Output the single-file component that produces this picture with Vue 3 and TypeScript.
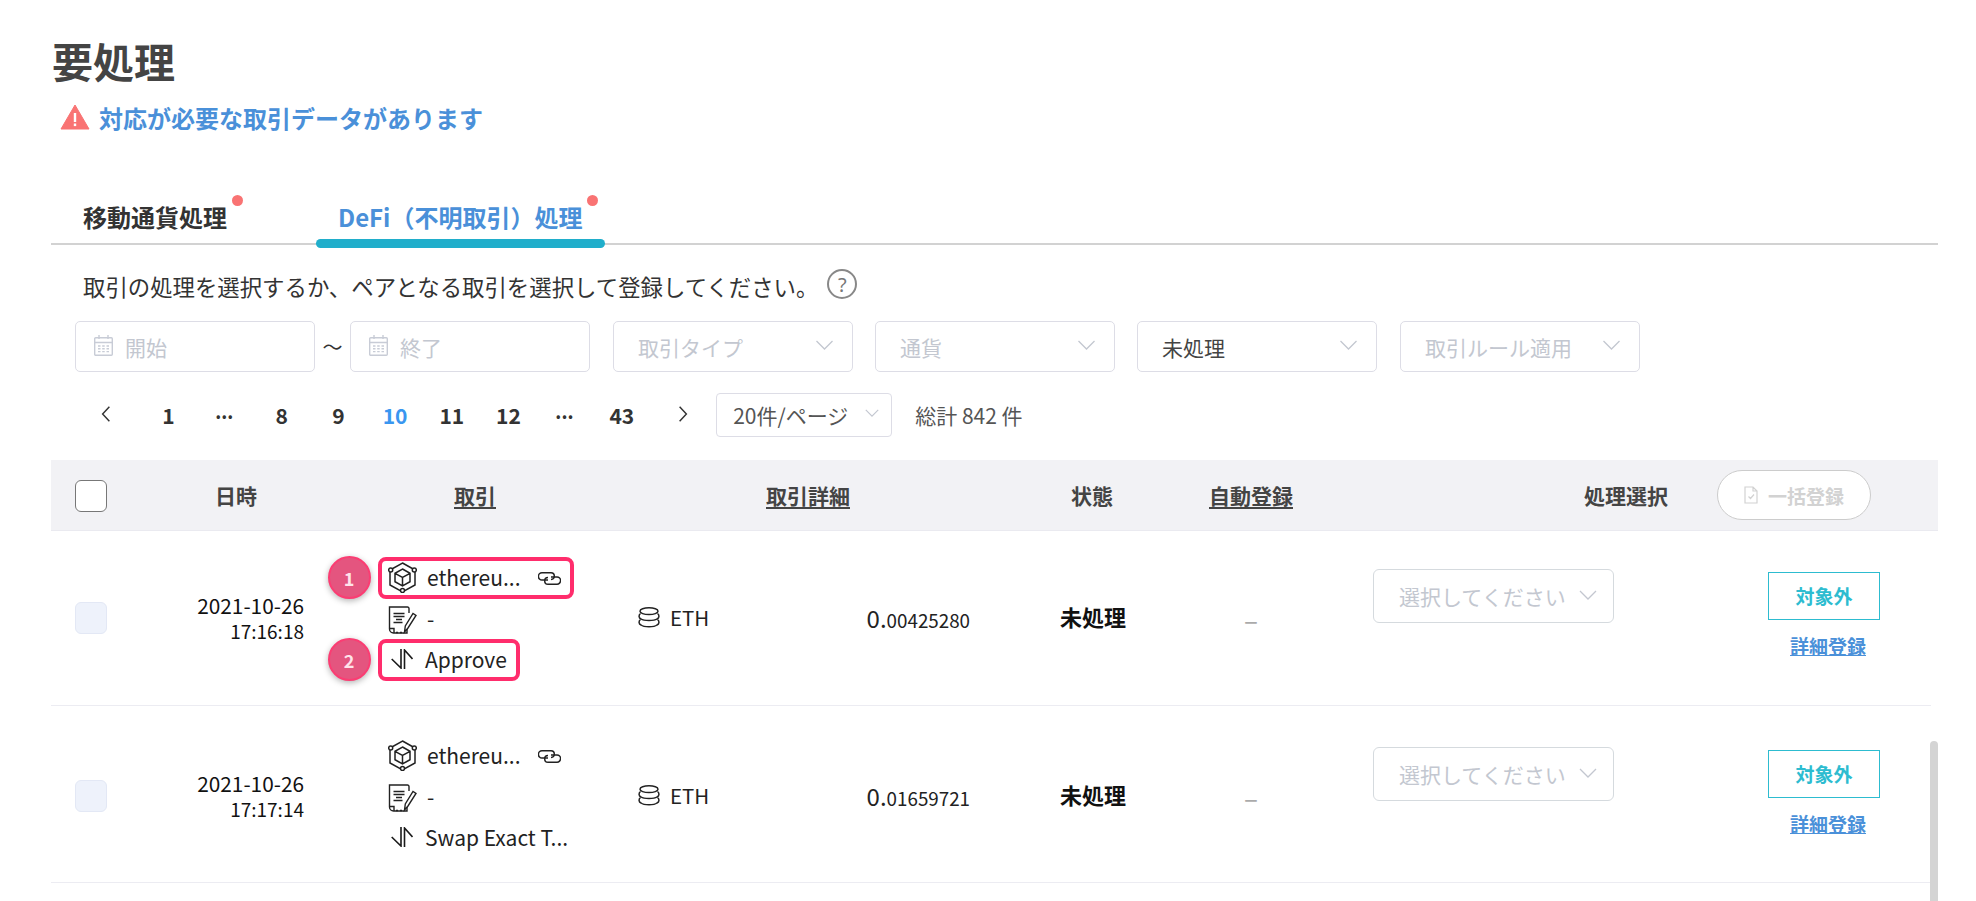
<script setup lang="ts">
interface Row { date: string; time: string; method: string; amount: string; mark?: boolean }
const rows: Row[] = [
  { date: '2021-10-26', time: '17:16:18', method: 'Approve', amount: '00425280', mark: true },
  { date: '2021-10-26', time: '17:17:14', method: 'Swap Exact T...', amount: '01659721' },
  { date: '', time: '', method: '', amount: '' },
]
const pages = ['1', '•••', '8', '9', '10', '11', '12', '•••', '43']
const filters = [
  { label: '取引タイプ', on: false },
  { label: '通貨', on: false },
  { label: '未処理', on: true },
  { label: '取引ルール適用', on: false },
]
</script>

<template>
  <div class="page">
    <h1 class="title">要処理</h1>
    <div class="warn">
      <svg class="warn-ico" viewBox="0 0 30 26"><path d="M15 1 L29 25 H1 Z" fill="#f97373" stroke="#f97373" stroke-linejoin="round" /><rect x="13.8" y="9" width="2.4" height="9" fill="#fff" /><rect x="13.8" y="19.5" width="2.4" height="2.6" fill="#fff" /></svg>
      <span>対応が必要な取引データがあります</span>
    </div>

    <div class="tabs">
      <div class="tab"><span class="tab-txt">移動通貨処理<i class="dot"></i></span></div>
      <div class="tab active"><span class="tab-txt">DeFi（不明取引）処理<i class="dot"></i></span></div>
    </div>

    <div class="help">
      <span>取引の処理を選択するか、ペアとなる取引を選択して登録してください。</span>
      <span class="q">?</span>
    </div>

    <div class="filters">
      <div class="field date">
        <svg class="cal" viewBox="0 0 19 21" fill="none" stroke="#c8ccd6" stroke-width="1.4"><rect x="0.7" y="2.700" width="17.600" height="17.600" rx="1" /><path d="M0.700 7.500h17.600M5 0v4M14 0v4M4 11h2.500M8.200 11h2.500M12.500 11h2.500M4 13.800h2.500M8.200 13.800h2.500M12.500 13.800h2.500M4 16.600h2.500M8.200 16.600h2.500M12.500 16.600h2.500" /></svg>
        <span class="ph">開始</span>
      </div>
      <span class="tilde">～</span>
      <div class="field date">
        <svg class="cal" viewBox="0 0 19 21" fill="none" stroke="#c8ccd6" stroke-width="1.4"><rect x="0.7" y="2.700" width="17.600" height="17.600" rx="1" /><path d="M0.700 7.500h17.600M5 0v4M14 0v4M4 11h2.500M8.200 11h2.500M12.500 11h2.500M4 13.800h2.500M8.200 13.800h2.500M12.500 13.800h2.500M4 16.600h2.500M8.200 16.600h2.500M12.500 16.600h2.500" /></svg>
        <span class="ph">終了</span>
      </div>
      <div v-for="f in filters" :key="f.label" class="field sel">
        <span :class="f.on ? 'val' : 'ph'">{{ f.label }}</span>
        <svg class="chev" viewBox="0 0 18 10" fill="none" stroke="#c3c7d0" stroke-width="1.300"><path d="M1 1l8 8 8-8" /></svg>
      </div>
    </div>

    <div class="pager">
      <svg class="arrow" viewBox="0 0 10 16" fill="none" stroke="#333" stroke-width="1.300"><path d="M8 1.500L2 8l6 6.500" /></svg>
      <span v-for="(p, i) in pages" :key="i" class="pg" :class="{ cur: p === '10', more: p === '•••' }">{{ p }}</span>
      <svg class="arrow next" viewBox="0 0 10 16" fill="none" stroke="#333" stroke-width="1.300"><path d="M2 1.500L8 8l-6 6.500" /></svg>
      <div class="size">
        <span>20件/ページ</span>
        <svg class="chev small" viewBox="0 0 18 10" fill="none" stroke="#c3c7d0" stroke-width="1.500"><path d="M1 1l8 8 8-8" /></svg>
      </div>
      <span class="total">総計 842 件</span>
    </div>

    <div class="table">
      <div class="grid head">
        <div class="c-check"><span class="box"></span></div>
        <div class="center">日時</div>
        <div class="center u">取引</div>
        <div class="center u">取引詳細</div>
        <div class="center">状態</div>
        <div class="center u">自動登録</div>
        <div class="c-proc">処理選択</div>
        <div>
          <span class="bulk">
            <svg viewBox="0 0 14 18" width="14" height="18" fill="none" stroke="#d2d2d2" stroke-width="1.200"><path d="M1 1h8l4 4v12H1zM9 1v4h4M4.500 10.500l2 2 3.500-4" /></svg>
            一括登録
          </span>
        </div>
      </div>

      <div v-for="(r, i) in rows" :key="i" class="grid row">
        <template v-if="r.date">
          <div class="c-check"><span class="box off"></span></div>
          <div class="c-date"><span>{{ r.date }}</span><small>{{ r.time }}</small></div>
          <div class="c-tx">
            <div class="tx-line">
              <svg class="tx-ico" viewBox="0 0 29 31" fill="none" stroke="#222" stroke-width="1.500"><path d="M14.500 1L27 8v15l-12.500 7L2 23V8z" /><path d="M14.500 7l7.500 4.300v8.400l-7.500 4.300-7.500-4.300v-8.400zM7 11.300l7.500 4.200 7.500-4.200M14.500 15.500V24" /><circle cx="2.700" cy="8" r="2" fill="#fff" /><circle cx="26.300" cy="8" r="2" fill="#fff" /><circle cx="14.500" cy="28.500" r="2" fill="#fff" /></svg>
              <span class="tx-txt">ethereu...</span>
              <svg class="link" viewBox="0 0 23 13" fill="none" stroke="#222" stroke-width="1.500"><path d="M10 8H4A3.600 3.600 0 0 1 4 .8H13A3.300 3.300 0 0 1 13 7.400" /><path d="M13 5H19A3.600 3.600 0 0 1 19 12.200H10A3.300 3.300 0 0 1 10 5.600" /></svg>
            </div>
            <div class="tx-line">
              <svg class="tx-ico doc" viewBox="0 0 29 28" fill="none" stroke="#222" stroke-width="1.400"><path d="M21 7V2.500A1.500 1.500 0 0 0 19.500 1H1.500V23a4 4 0 0 0 4 4H19v-4" /><path d="M1.500 22.500H6V27" /><path d="M5.500 7.500h11M5.500 10.500h11M8 13.500h6M5.500 16.500h9M8 26.500h2M12 26.500h2" /><path d="M16.500 26l.8-6L25 7.500l3 2-8 12.500z" /></svg>
              <span class="tx-txt">-</span>
            </div>
            <div class="tx-line">
              <svg class="arrows" viewBox="0 0 22 20" fill="none" stroke="#1a1a1a" stroke-width="1.600"><path d="M10 0v19L.7 10" /><path d="M13.500 20V1L21.500 10" /></svg>
              <span class="tx-txt m">{{ r.method }}</span>
            </div>
          </div>
          <div class="c-detail">
            <span class="coin">
              <svg viewBox="0 0 22 21" width="22" height="21" fill="none" stroke="#222" stroke-width="1.500"><ellipse cx="11" cy="4.200" rx="9" ry="3.400" /><path d="M2.500 6.500C.5 8 .5 10.800 3 12c3 2 13 2 16 0 2.500-1.200 2.500-4 .5-5.500" /><path d="M2.500 12.500C.5 14 .5 16.800 3 18c3 2.300 13 2.300 16 0 2.500-1.200 2.500-4 .5-5.500" /></svg>
              ETH
            </span>
            <span class="amt">0.<small>{{ r.amount }}</small></span>
          </div>
          <div class="center st">未処理</div>
          <div class="center dash">–</div>
          <div class="c-select">
            <div class="pick">
              <span>選択してください</span>
              <svg class="chev pk" viewBox="0 0 18 10" fill="none" stroke="#c3c7d0" stroke-width="1.300"><path d="M1 1l8 8 8-8" /></svg>
            </div>
          </div>
          <div class="c-act">
            <span class="btn">対象外</span>
            <span class="lnk">詳細登録</span>
          </div>
        </template>
        <template v-if="r.mark">
          <span class="num n1">1</span>
          <span class="frame f1"></span>
          <span class="num n2">2</span>
          <span class="frame f2"></span>
        </template>
      </div>
      <div class="thumb"></div>
    </div>
  </div>
</template>

<style>
html, body { margin: 0; background: #fff; overflow: hidden; }
</style>

<style scoped>
.page {
  height: 901px;
  overflow: hidden;
  box-sizing: border-box;
  padding: 34px 38px 0 51px;
  font-family: "Noto Sans CJK JP", "Noto Sans", sans-serif;
  color: #333;
  background: #fff;
}
.title { margin: 0 0 0 1px; font-size: 41px; line-height: 52px; font-weight: 700; color: #444; }
.warn { display: flex; align-items: center; gap: 9px; margin: 14px 0 0 9px; height: 34px; font-size: 24px; font-weight: 700; color: #4a90d9; }
.warn-ico { width: 30px; height: 26px; }
.tabs { display: flex; height: 68px; margin-top: 43px; border-bottom: 2px solid #d2d2d2; box-sizing: border-box; }
.tab { padding: 0 23px 0 32px; display: flex; align-items: center; font-size: 24px; font-weight: 700; color: #333; position: relative; }
.tab-txt { position: relative; margin-top: 12px; }
.tab.active { margin-left: 66px; padding: 0 23px 0 22px; color: #4a90d9; }
.tab.active::after { content: ""; position: absolute; left: 0; right: 0; bottom: -5px; height: 9px; background: #20aecb; border-radius: 5px; }
.dot { position: absolute; top: -4px; right: -16px; width: 11px; height: 11px; border-radius: 50%; background: #f97373; }
.help { display: flex; align-items: center; gap: 9px; margin: 25px 0 0 32px; height: 32px; font-size: 22.400px; color: #333; }
.q { box-sizing: border-box; width: 30px; height: 30px; border: 2px solid #888; border-radius: 50%; display: flex; align-items: center; justify-content: center; color: #777; font-size: 20px; font-family: "Noto Sans", sans-serif; margin-top: -4px; }
.filters { display: flex; align-items: center; margin: 19px 0 0 24px; height: 51px; }
.field { box-sizing: border-box; width: 240px; height: 51px; border: 1px solid #dddde6; border-radius: 5px; display: flex; align-items: center; font-size: 21px; flex: none; }
.field.date { padding-left: 18px; gap: 12px; }
.field.sel { padding: 0 18px 0 24px; justify-content: space-between; margin-right: 22px; }
.field.sel:nth-last-child(2) { margin-right: 23px; }
.tilde { width: 35px; text-align: center; font-size: 20px; flex: none; }
.filters .field.date + .tilde + .field.date { margin-right: 23px; }
.cal { width: 19px; height: 21px; margin-top: -2px; }
.ph { color: #c3c7d0; }
.val { color: #444; }
.chev { width: 19px; height: 10px; margin-top: -4px; flex: none; }
.chev.small { width: 14px; height: 8px; }
.chev.pk { width: 18px; height: 10px; margin-top: -3px; }
.pager { display: flex; align-items: center; margin: 21px 0 0 49px; height: 44px; }
.arrow { width: 12px; height: 18px; margin-right: 28px; margin-top: -2px; flex: none; }
.arrow.next { margin: -2px 0 0 27px; }
.pg { width: 56.7px; text-align: center; font-size: 21px; font-weight: 700; color: #333; flex: none; }
.pg.cur { color: #3a96f0; }
.pg.more { font-size: 12px; letter-spacing: 1.500px; }
.size { box-sizing: border-box; margin-left: 27px; width: 176px; height: 44px; border: 1px solid #dddde6; border-radius: 4px; display: flex; align-items: center; justify-content: space-between; padding: 0 12px 0 16px; font-size: 21px; color: #555; white-space: nowrap; }
.total { margin-left: 23px; font-size: 21px; color: #555; }
.table { position: relative; margin-top: 23px; }
.grid { display: grid; grid-template-columns: 109px 152px 326px 340px 228px 90px 420px 222px; align-items: center; position: relative; }
.head { height: 71px; background: #f2f2f5; border-bottom: 1px solid #eaeaf0; box-sizing: border-box; font-size: 21px; font-weight: 700; color: #444; }
.row { height: 175px; width: 1880px; border-bottom: 1px solid #ececf2; box-sizing: border-box; }
.row + .row { height: 177px; padding-top: 4px; }
.center { text-align: center; }
.u { text-decoration: underline; text-underline-offset: 3px; }
.c-check { padding-left: 24px; display: flex; }
.box { box-sizing: border-box; width: 32px; height: 32px; border: 1px solid #777; border-radius: 6px; background: #fff; margin-top: 2px; }
.box.off { background: #eef2fb; border-color: #e3e8f5; margin-top: 0; }
.c-proc { text-align: right; padding-right: 48px; }
.bulk { box-sizing: border-box; display: inline-flex; align-items: center; justify-content: center; gap: 10px; width: 154px; height: 50px; margin-left: 1px; border: 1px solid #ccc; border-radius: 25px; background: #fff; color: #d2d2d2; font-size: 19px; }
.c-date { display: flex; flex-direction: column; align-items: flex-end; padding-right: 8px; margin-bottom: 1px; font-size: 20.800px; line-height: 26px; color: #111; }
.c-date small { font-size: 19px; }
.c-tx { padding-left: 66px; display: flex; flex-direction: column; }
.tx-line { display: flex; align-items: center; height: 41px; font-size: 21px; color: #222; }
.tx-ico { width: 29px; height: 31px; margin-left: 10px; flex: none; }
.tx-ico.doc { height: 28px; margin-top: 3px; }
.arrows { width: 22px; height: 20px; margin-left: 13px; flex: none; }
.tx-txt { margin-left: 10px; white-space: nowrap; }
.tx-txt.m { margin-left: 12px; }
.link { width: 23px; height: 13px; margin-left: 17px; flex: none; margin-top: 3px; }
.c-detail { display: flex; justify-content: space-between; align-items: center; padding: 0 8px 0 0; margin-bottom: 2px; font-size: 20.500px; color: #222; }
.coin { display: flex; align-items: center; gap: 10px; }
.amt { font-size: 24px; }
.amt small { font-size: 18.800px; }
.st { font-weight: 700; font-size: 22px; color: #111; margin: 0 0 4px 2px; }
.dash { color: #aaa; font-size: 26px; }
.c-select { padding-left: 77px; margin-bottom: 44px; }
.pick { box-sizing: border-box; width: 241px; height: 54px; border: 1px solid #d5dade; border-radius: 6px; display: flex; align-items: center; justify-content: space-between; padding: 0 16px 0 25px; font-size: 21px; color: #c3c7d0; white-space: nowrap; }
.c-act { padding-left: 52px; margin-bottom: 6px; display: flex; flex-direction: column; align-items: flex-start; }
.btn { box-sizing: border-box; width: 112px; height: 48px; border: 1px solid #2dbcd0; display: flex; align-items: center; justify-content: center; font-size: 19px; font-weight: 700; color: #2dbcd0; }
.lnk { margin: 13px 0 0 22px; font-size: 19px; font-weight: 700; color: #4a90d9; text-decoration: underline; line-height: 26px; }
.frame { position: absolute; box-sizing: border-box; border: 4px solid #ff2d6c; border-radius: 8px; left: 327px; }
.f1 { top: 26px; width: 196px; height: 42px; }
.f2 { top: 108px; width: 142px; height: 42px; }
.num { position: absolute; left: 276.500px; width: 43px; height: 43px; box-sizing: border-box; border: 2px solid #fb3d73; border-radius: 50%; background: #e4557f; color: #ffe3ea; display: flex; align-items: center; justify-content: center; font-size: 18px; font-weight: 700; box-shadow: 0 2px 6px rgba(0,0,0,.3); }
.n1 { top: 25px; }
.n2 { top: 107px; }
.thumb { position: absolute; top: 281px; right: 0; width: 8px; height: 200px; background: #d4d4d4; border-radius: 4px; }
</style>
